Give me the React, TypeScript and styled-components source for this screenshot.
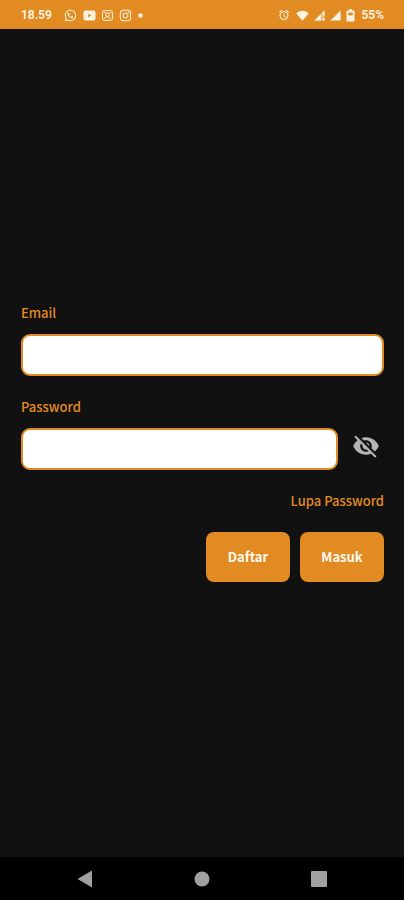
import React, { useState } from "react";
import styled, { createGlobalStyle } from "styled-components";
import { MdVisibility, MdVisibilityOff, MdAlarm } from "react-icons/md";
import { FaWhatsapp, FaInstagram } from "react-icons/fa";

const orange = "#e18b22";

const GlobalStyle = createGlobalStyle`
  *, *::before, *::after { box-sizing: border-box; }
  body { margin: 0; background: #111111; }
  button, input { font: inherit; }
`;

const Screen = styled.div`
  min-height: 100vh;
  display: flex;
  flex-direction: column;
  background: #111111;
  color: ${orange};
  font-family: "Noto Sans CJK SC", "Noto Sans", sans-serif;
  font-size: 13px;
  font-weight: 500;
  line-height: 18px;
`;

const StatusBar = styled.header`
  height: 29px;
  padding: 1px 20px 0 21px;
  display: flex;
  align-items: center;
  justify-content: space-between;
  background: ${orange};
  color: #fff4e2;
  font-family: Roboto, sans-serif;
  font-size: 12px;
  font-weight: 600;
  line-height: 16px;
`;

const StatusGroup = styled.div<{ $gap: number }>`
  display: flex;
  align-items: center;
  gap: ${(p) => p.$gap}px;
  svg { display: block; flex: none; }
`;

const Clock = styled.time`
  margin-right: 6px;
`;

const Form = styled.form`
  flex: 1;
  padding: 0 20px 0 21px;
  display: flex;
  flex-direction: column;
  justify-content: center;
`;

const Field = styled.div`
  display: flex;
  flex-direction: column;
  gap: 12px;
  margin-bottom: 22px;
`;

const Label = styled.label`
  align-self: flex-start;
`;

const InputRow = styled.div`
  display: flex;
  align-items: flex-start;
  gap: 12px;
`;

const TextInput = styled.input`
  flex: 1;
  min-width: 0;
  width: 100%;
  height: 42px;
  padding: 0 12px;
  border: 2px solid ${orange};
  border-radius: 9px;
  background: #ffffff;
  color: #111111;
  outline: none;
`;

const EyeButton = styled.button`
  width: 34px;
  height: 36px;
  padding: 0 2px 0 0;
  border: 0;
  background: none;
  color: #b4b4b6;
  display: flex;
  align-items: center;
  justify-content: center;
  cursor: pointer;
`;

const ForgotLink = styled.a`
  align-self: flex-end;
  color: inherit;
  text-decoration: none;
`;

const Actions = styled.div`
  display: flex;
  justify-content: flex-end;
  gap: 10px;
  margin-top: 22px;
`;

const ActionButton = styled.button`
  width: 84px;
  height: 50px;
  padding: 0;
  border: 0;
  border-radius: 8px;
  background: ${orange};
  color: #fffaf0;
  font-weight: 700;
  cursor: pointer;
`;

const NavBar = styled.nav`
  height: 43px;
  padding: 0 27px;
  display: grid;
  grid-template-columns: repeat(3, 1fr);
  background: #000000;
`;

const NavButton = styled.button`
  padding: 0;
  border: 0;
  background: none;
  color: #a0a0a0;
  display: flex;
  align-items: center;
  justify-content: center;
  svg { display: block; }
`;

const YoutubeIcon = () => (
  <svg width="13" height="11" viewBox="0 0 13 11" aria-hidden="true">
    <rect x="0.5" y="0.5" width="12" height="10" rx="2" fill="currentColor" />
    <path d="M5.3 3.6v3.8l3.2-1.9z" fill={orange} />
  </svg>
);

const GalleryIcon = () => (
  <svg width="11" height="11" viewBox="0 0 11 11" fill="none" stroke="currentColor" aria-hidden="true">
    <rect x="0.6" y="0.6" width="9.8" height="9.8" rx="2" />
    <circle cx="5.5" cy="4.6" r="1.8" />
    <path d="M2 2.2l1.5 1M9 2.2l-1.5 1M2.2 9l2-2.2h2.6l2 2.2" />
  </svg>
);

const DotIcon = () => (
  <svg width="5" height="5" viewBox="0 0 5 5" aria-hidden="true">
    <circle cx="2.5" cy="2.5" r="2.2" fill="currentColor" />
  </svg>
);

const WifiIcon = () => (
  <svg width="13" height="11" viewBox="0 0 13 11" aria-hidden="true">
    <path d="M6.5 10.8L0.3 3.4C3.6 0 9.4 0 12.7 3.4z" fill="currentColor" />
  </svg>
);

const SignalIcon = ({ weak = false }: { weak?: boolean }) => (
  <svg width="11" height="11" viewBox="0 0 11 11" aria-hidden="true">
    {weak ? (
      <>
        <path d="M0.4 10.6L10.6 0.4V10.6z" fill="currentColor" opacity="0.5" />
        <path d="M0.4 10.6L6.8 4.2V10.6zM8.4 2.6l2.2-2.2v5H8.4zM8.6 8.6h2v2h-2z" fill="currentColor" />
      </>
    ) : (
      <path d="M0.4 10.6L10.6 0.4V10.6z" fill="currentColor" />
    )}
  </svg>
);

const BatteryIcon = () => (
  <svg width="9" height="13" viewBox="0 0 9 13" aria-hidden="true">
    <path d="M3 0h3v1.4h1.5q1 0 1 1v9.1q0 1-1 1h-6q-1 0-1-1V2.4q0-1 1-1H3z" fill="currentColor" />
    <path d="M2.3 3.6h4.4v2.8H2.3z" fill={orange} />
  </svg>
);

export default function App() {
  const [visible, setVisible] = useState(false);
  return (
    <Screen>
      <GlobalStyle />
      <StatusBar>
        <StatusGroup $gap={6}>
          <Clock>18.59</Clock>
          <FaWhatsapp size={13} />
          <YoutubeIcon />
          <GalleryIcon />
          <FaInstagram size={13} />
          <DotIcon />
        </StatusGroup>
        <StatusGroup $gap={6}>
          <MdAlarm size={12} />
          <StatusGroup $gap={5}>
            <WifiIcon />
            <SignalIcon weak />
            <SignalIcon />
            <BatteryIcon />
          </StatusGroup>
          <span>55%</span>
        </StatusGroup>
      </StatusBar>
      <Form onSubmit={(e) => e.preventDefault()}>
        <Field>
          <Label htmlFor="email">Email</Label>
          <InputRow>
            <TextInput id="email" type="email" />
          </InputRow>
        </Field>
        <Field>
          <Label htmlFor="password">Password</Label>
          <InputRow>
            <TextInput id="password" type={visible ? "text" : "password"} />
            <EyeButton type="button" aria-label="Tampilkan password" onClick={() => setVisible(!visible)}>
              {visible ? <MdVisibility size={28} /> : <MdVisibilityOff size={28} />}
            </EyeButton>
          </InputRow>
        </Field>
        <ForgotLink href="#lupa-password">Lupa Password</ForgotLink>
        <Actions>
          <ActionButton type="button">Daftar</ActionButton>
          <ActionButton type="submit">Masuk</ActionButton>
        </Actions>
      </Form>
      <NavBar>
        <NavButton type="button" aria-label="Kembali">
          <svg width="16" height="18" viewBox="0 0 16 18" aria-hidden="true">
            <path d="M0.5 9L15 0.5v17z" fill="currentColor" />
          </svg>
        </NavButton>
        <NavButton type="button" aria-label="Beranda">
          <svg width="16" height="16" viewBox="0 0 16 16" aria-hidden="true">
            <circle cx="8" cy="8" r="7.5" fill="currentColor" />
          </svg>
        </NavButton>
        <NavButton type="button" aria-label="Aplikasi terbaru">
          <svg width="16" height="16" viewBox="0 0 16 16" aria-hidden="true">
            <rect width="16" height="16" rx="1" fill="currentColor" />
          </svg>
        </NavButton>
      </NavBar>
    </Screen>
  );
}
